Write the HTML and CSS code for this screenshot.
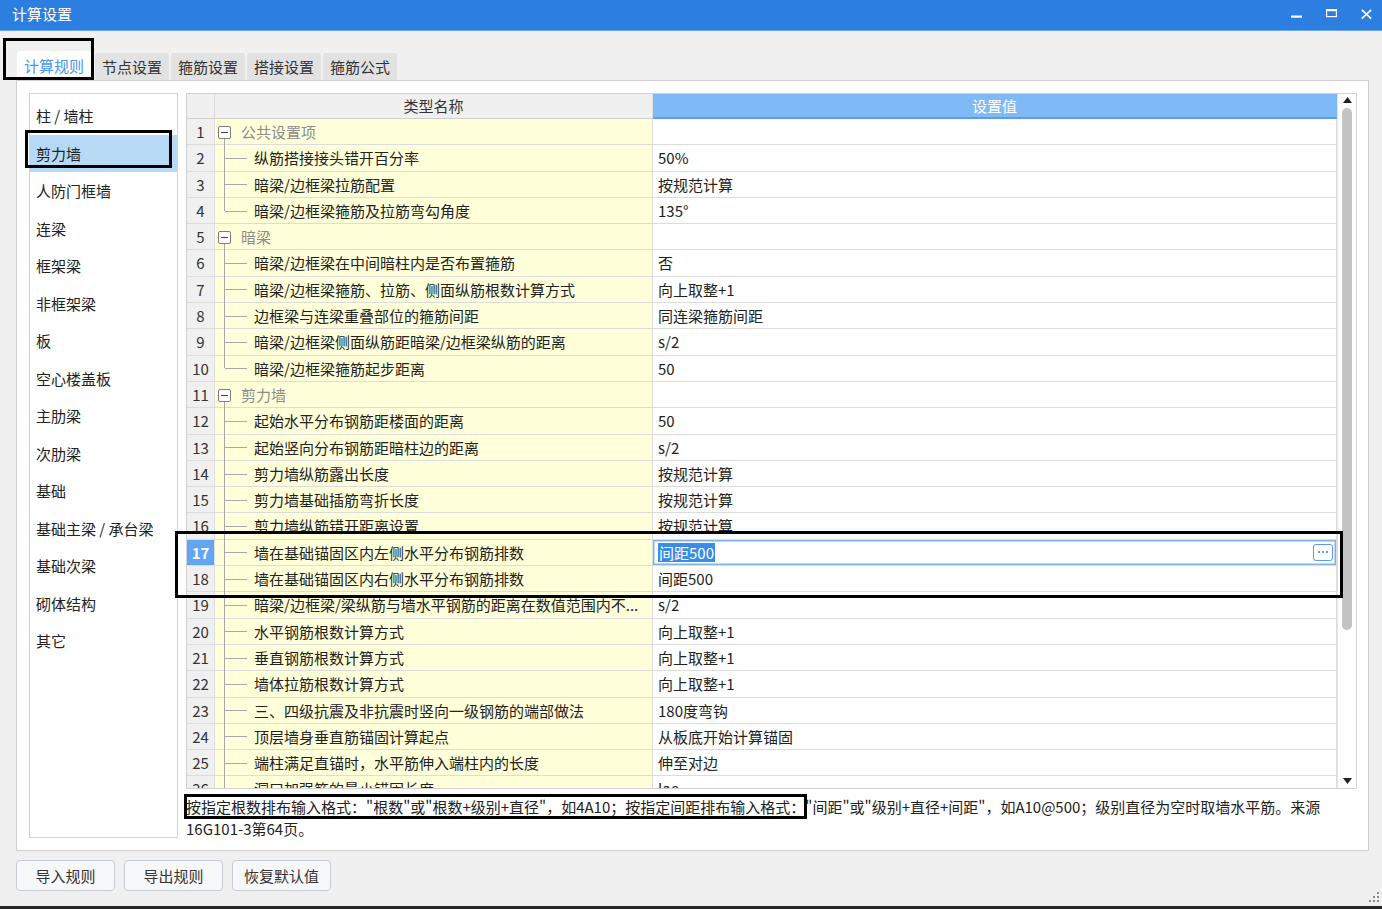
FILE: index.html
```html
<!DOCTYPE html>
<html lang="zh-CN">
<head>
<meta charset="utf-8">
<title>计算设置</title>
<link rel="stylesheet" href="styles.css">
</head>
<body>
<div class="window">
  <div class="titlebar">
    <div class="title">计算设置</div>
    <div class="controls">
      <svg class="ctl" width="11" height="11" viewBox="0 0 11 11"><rect x="0" y="6.5" width="11" height="2.2" fill="#fff"/></svg>
      <svg class="ctl" width="11" height="11" viewBox="0 0 11 11"><rect x="0.6" y="0.6" width="9.8" height="7" fill="none" stroke="#fff" stroke-width="1.2"/><rect x="0" y="0" width="11" height="2.2" fill="#fff"/></svg>
      <svg class="ctl" width="11" height="11" viewBox="0 0 11 11"><path d="M0.8 0.8 L10.2 9.6 M10.2 0.8 L0.8 9.6" stroke="#fff" stroke-width="1.6" fill="none"/></svg>
    </div>
  </div>

  <div class="main">
    <div class="tabs">
      <div class="tab active">计算规则</div>
      <div class="tab">节点设置</div>
      <div class="tab">箍筋设置</div>
      <div class="tab">搭接设置</div>
      <div class="tab">箍筋公式</div>
    </div>

    <div class="panel">
      <div class="list">
        <div class="list-item">柱 / 墙柱</div>
        <div class="list-item sel">剪力墙</div>
        <div class="list-item">人防门框墙</div>
        <div class="list-item">连梁</div>
        <div class="list-item">框架梁</div>
        <div class="list-item">非框架梁</div>
        <div class="list-item">板</div>
        <div class="list-item">空心楼盖板</div>
        <div class="list-item">主肋梁</div>
        <div class="list-item">次肋梁</div>
        <div class="list-item">基础</div>
        <div class="list-item">基础主梁 / 承台梁</div>
        <div class="list-item">基础次梁</div>
        <div class="list-item">砌体结构</div>
        <div class="list-item">其它</div>
      </div>

      <div class="right">
        <div class="table-wrap">
          <div class="grid">
            <div class="row head">
              <div class="c hnum"></div>
              <div class="c hname">类型名称</div>
              <div class="c hval">设置值</div>
            </div>
            <div class="row"><div class="c num">1</div><div class="c name group"><span class="toggle"></span>公共设置项</div><div class="c val"></div></div>
            <div class="row"><div class="c num">2</div><div class="c name child">纵筋搭接接头错开百分率</div><div class="c val">50%</div></div>
            <div class="row"><div class="c num">3</div><div class="c name child">暗梁/边框梁拉筋配置</div><div class="c val">按规范计算</div></div>
            <div class="row"><div class="c num">4</div><div class="c name child last">暗梁/边框梁箍筋及拉筋弯勾角度</div><div class="c val">135°</div></div>
            <div class="row"><div class="c num">5</div><div class="c name group"><span class="toggle"></span>暗梁</div><div class="c val"></div></div>
            <div class="row"><div class="c num">6</div><div class="c name child">暗梁/边框梁在中间暗柱内是否布置箍筋</div><div class="c val">否</div></div>
            <div class="row"><div class="c num">7</div><div class="c name child">暗梁/边框梁箍筋、拉筋、侧面纵筋根数计算方式</div><div class="c val">向上取整+1</div></div>
            <div class="row"><div class="c num">8</div><div class="c name child">边框梁与连梁重叠部位的箍筋间距</div><div class="c val">同连梁箍筋间距</div></div>
            <div class="row"><div class="c num">9</div><div class="c name child">暗梁/边框梁侧面纵筋距暗梁/边框梁纵筋的距离</div><div class="c val">s/2</div></div>
            <div class="row"><div class="c num">10</div><div class="c name child last">暗梁/边框梁箍筋起步距离</div><div class="c val">50</div></div>
            <div class="row"><div class="c num">11</div><div class="c name group"><span class="toggle"></span>剪力墙</div><div class="c val"></div></div>
            <div class="row"><div class="c num">12</div><div class="c name child">起始水平分布钢筋距楼面的距离</div><div class="c val">50</div></div>
            <div class="row"><div class="c num">13</div><div class="c name child">起始竖向分布钢筋距暗柱边的距离</div><div class="c val">s/2</div></div>
            <div class="row"><div class="c num">14</div><div class="c name child">剪力墙纵筋露出长度</div><div class="c val">按规范计算</div></div>
            <div class="row"><div class="c num">15</div><div class="c name child">剪力墙基础插筋弯折长度</div><div class="c val">按规范计算</div></div>
            <div class="row"><div class="c num">16</div><div class="c name child">剪力墙纵筋错开距离设置</div><div class="c val">按规范计算</div></div>
            <div class="row"><div class="c num sel">17</div><div class="c name child">墙在基础锚固区内左侧水平分布钢筋排数</div><div class="c val edit"><span class="hl">间距500</span><span class="more"><svg width="12" height="4" viewBox="0 0 12 4"><circle cx="2" cy="2" r="1.1" fill="#3f86e0"/><circle cx="6" cy="2" r="1.1" fill="#3f86e0"/><circle cx="10" cy="2" r="1.1" fill="#3f86e0"/></svg></span></div></div>
            <div class="row"><div class="c num">18</div><div class="c name child">墙在基础锚固区内右侧水平分布钢筋排数</div><div class="c val">间距500</div></div>
            <div class="row"><div class="c num">19</div><div class="c name child">暗梁/边框梁/梁纵筋与墙水平钢筋的距离在数值范围内不...</div><div class="c val">s/2</div></div>
            <div class="row"><div class="c num">20</div><div class="c name child">水平钢筋根数计算方式</div><div class="c val">向上取整+1</div></div>
            <div class="row"><div class="c num">21</div><div class="c name child">垂直钢筋根数计算方式</div><div class="c val">向上取整+1</div></div>
            <div class="row"><div class="c num">22</div><div class="c name child">墙体拉筋根数计算方式</div><div class="c val">向上取整+1</div></div>
            <div class="row"><div class="c num">23</div><div class="c name child">三、四级抗震及非抗震时竖向一级钢筋的端部做法</div><div class="c val">180度弯钩</div></div>
            <div class="row"><div class="c num">24</div><div class="c name child">顶层墙身垂直筋锚固计算起点</div><div class="c val">从板底开始计算锚固</div></div>
            <div class="row"><div class="c num">25</div><div class="c name child">端柱满足直锚时，水平筋伸入端柱内的长度</div><div class="c val">伸至对边</div></div>
            <div class="row"><div class="c num">26</div><div class="c name child">洞口加强筋的最小锚固长度</div><div class="c val">lae</div></div>
          </div>
          <div class="vscroll">
            <svg width="9" height="6" viewBox="0 0 9 6"><path d="M0 6 L4.5 0 L9 6 Z" fill="#222"/></svg>
            <div class="thumb"></div>
            <div class="spacer"></div>
            <svg width="9" height="6" viewBox="0 0 9 6"><path d="M0 0 L4.5 6 L9 0 Z" fill="#222"/></svg>
          </div>
        </div>
        <div class="desc"><span class="mark">按指定根数排布输入格式：&quot;根数&quot;或&quot;根数+级别+直径&quot;，如4A10；按指定间距排布输入格式：</span>&quot;间距&quot;或&quot;级别+直径+间距&quot;，如A10@500；级别直径为空时取墙水平筋。来源<br>16G101-3第64页。</div>
      </div>
    </div>

    <div class="buttons">
      <button class="btn">导入规则</button>
      <button class="btn">导出规则</button>
      <button class="btn">恢复默认值</button>
    </div>
  </div>

  <svg class="grip" width="10" height="10" viewBox="0 0 10 10">
    <rect x="8" y="0" width="2" height="2" fill="#8a8a8a"/>
    <rect x="4" y="4" width="2" height="2" fill="#8a8a8a"/>
    <rect x="8" y="4" width="2" height="2" fill="#8a8a8a"/>
    <rect x="0" y="8" width="2" height="2" fill="#8a8a8a"/>
    <rect x="4" y="8" width="2" height="2" fill="#8a8a8a"/>
    <rect x="8" y="8" width="2" height="2" fill="#8a8a8a"/>
  </svg>

  <div class="anno anno-tab"></div>
  <div class="anno anno-list"></div>
  <div class="anno anno-rows"></div>
</div>
</body>
</html>
```

FILE: styles.css
```css
* { box-sizing: border-box; }
html, body { margin: 0; padding: 0; }
body {
  background: #262626;
  font-family: "Noto Sans CJK SC", "Microsoft YaHei", sans-serif;
  font-size: 15px;
  color: #222;
}
.window {
  position: relative;
  width: 1382px;
  height: 906px;
  background: #f0f0f0;
  overflow: hidden;
}

/* title bar */
.titlebar {
  height: 31px;
  background: #2c7fe0;
  border-bottom: 1px solid #6ea7ea;
  display: flex;
  align-items: center;
  padding-left: 12px;
  color: #fff;
}
.title { flex: 1; line-height: 28px; margin-top: -2px; }
.controls { display: flex; gap: 24px; padding-right: 10px; margin-top: -2px; }
.ctl { display: block; }

/* main */
.main { padding: 20px 13px 0 16px; }
.tabs {
  display: flex;
  align-items: flex-end;
  gap: 2px;
  padding-left: 1px;
  height: 29px;
}
.tab {
  height: 27px;
  line-height: 27px;
  padding: 0 7px;
  background: #e2e2e2;
  border-radius: 3px 3px 0 0;
  color: #333;
}
.tab.active {
  height: 29px;
  line-height: 29px;
  background: #fff;
  color: #4a96ea;
  margin-right: 2px;
}

.panel {
  height: 771px;
  background: #fff;
  border: 1px solid #cfcfcf;
  padding: 12px 11px 12px 12px;
  display: flex;
  gap: 8px;
}

.list {
  width: 149px;
  border: 1px solid #d2d2d2;
  padding-top: 3px;
  flex-shrink: 0;
}
.list-item {
  height: 37.5px;
  line-height: 37.5px;
  padding-left: 6px;
  white-space: nowrap;
}
.list-item.sel { background: #b6daf6; }

.right {
  flex: 1;
  min-width: 0;
  display: flex;
  flex-direction: column;
}
.table-wrap {
  height: 696px;
  border: 1px solid #d2d2d2;
  display: flex;
  flex-shrink: 0;
}
.grid {
  flex: 1;
  min-width: 0;
  overflow: hidden;
}
.row {
  display: grid;
  grid-template-columns: 28px 438px 1fr;
  height: 26.3px;
}
.c {
  border-right: 1px solid #dcdcdc;
  border-bottom: 1px solid #dcdcdc;
  line-height: 25.3px;
  white-space: nowrap;
  overflow: hidden;
}
.row.head { height: 25px; }
.head .c { line-height: 24px; text-align: center; }
.hnum { background: #f0f0f0; border-bottom-color: #cfcfcf; }
.hname { background: #f0f0f0; color: #333; border-bottom-color: #cfcfcf; }
.hval { background: #80baf6; color: #fff; border-bottom: 2px solid #5f9ee6; border-right-color: #80baf6; }

.num {
  background: #f0f0f0;
  text-align: center;
  color: #333;
}
.num.sel {
  background: #62a6f2;
  color: #fff;
  font-weight: bold;
}
.name {
  position: relative;
  background: #ffffd9;
  overflow: visible;
}
.name.group {
  padding-left: 3px;
  color: #8c8c8c;
}
.toggle {
  display: inline-block;
  width: 13px;
  height: 13px;
  border: 1px solid #7d7d7d;
  border-radius: 2px;
  margin-right: 10px;
  vertical-align: -1px;
  position: relative;
  background: #fff;
}
.toggle::before {
  content: "";
  position: absolute;
  left: 2px;
  right: 2px;
  top: 5px;
  height: 1px;
  background: #444;
}
.name.group::after {
  content: "";
  position: absolute;
  left: 9px;
  top: calc(50% + 7px);
  bottom: -1px;
  width: 1px;
  background: #a8a8a8;
}
.name.child { padding-left: 39px; }
.name.child::before {
  content: "";
  position: absolute;
  left: 9px;
  top: 0;
  bottom: -1px;
  width: 1px;
  background: #a8a8a8;
}
.name.child.last::before { bottom: 50%; }
.name.child::after {
  content: "";
  position: absolute;
  left: 10px;
  top: 50%;
  width: 22px;
  height: 1px;
  background: #a8a8a8;
}

.val {
  background: #fff;
  padding-left: 5px;
}
.val.edit {
  display: flex;
  align-items: center;
  justify-content: space-between;
  padding-left: 5px;
  padding-right: 3px;
  box-shadow: inset 0 0 0 1.5px #7fb3ee;
}
.hl {
  background: #3a8de6;
  color: #fff;
  line-height: 19px;
  padding: 0 1px;
}
.more {
  width: 20px;
  height: 17px;
  border: 1px solid #5d9be6;
  border-radius: 3px;
  background: #fff;
  display: flex;
  align-items: center;
  justify-content: center;
}
.more svg { display: block; }

.vscroll {
  width: 19px;
  background: #fff;
  border-left: 1px solid #e4e4e4;
  display: flex;
  flex-direction: column;
  align-items: center;
  padding: 3px 0 4px;
}
.vscroll svg { display: block; flex-shrink: 0; }
.thumb {
  width: 10px;
  height: 522px;
  margin-top: 5px;
  background: #c4c4c4;
  border-radius: 5px;
  flex-shrink: 0;
}
.spacer { flex: 1; }

.desc {
  margin-top: 7px;
  line-height: 22px;
  white-space: nowrap;
}
.mark {
  outline: 3px solid #000;
  outline-offset: -1px;
}

.buttons {
  display: flex;
  gap: 9px;
  margin-top: 9px;
}
.btn {
  width: 99px;
  height: 31px;
  background: #f7f8fa;
  border: 1px solid #c7cbd3;
  border-radius: 4px;
  font-family: "Noto Sans CJK SC", "Microsoft YaHei", sans-serif;
  font-size: 15px;
  color: #333;
  padding: 0;
}

.grip {
  position: absolute;
  right: 3px;
  bottom: 4px;
}

.anno {
  position: absolute;
  border: 3px solid #000;
  pointer-events: none;
}
.anno-tab { left: 3px; top: 38px; width: 91px; height: 42px; }
.anno-list { left: 25px; top: 130px; width: 147px; height: 38px; }
.anno-rows { left: 175px; top: 531px; width: 1168px; height: 67px; }
```
